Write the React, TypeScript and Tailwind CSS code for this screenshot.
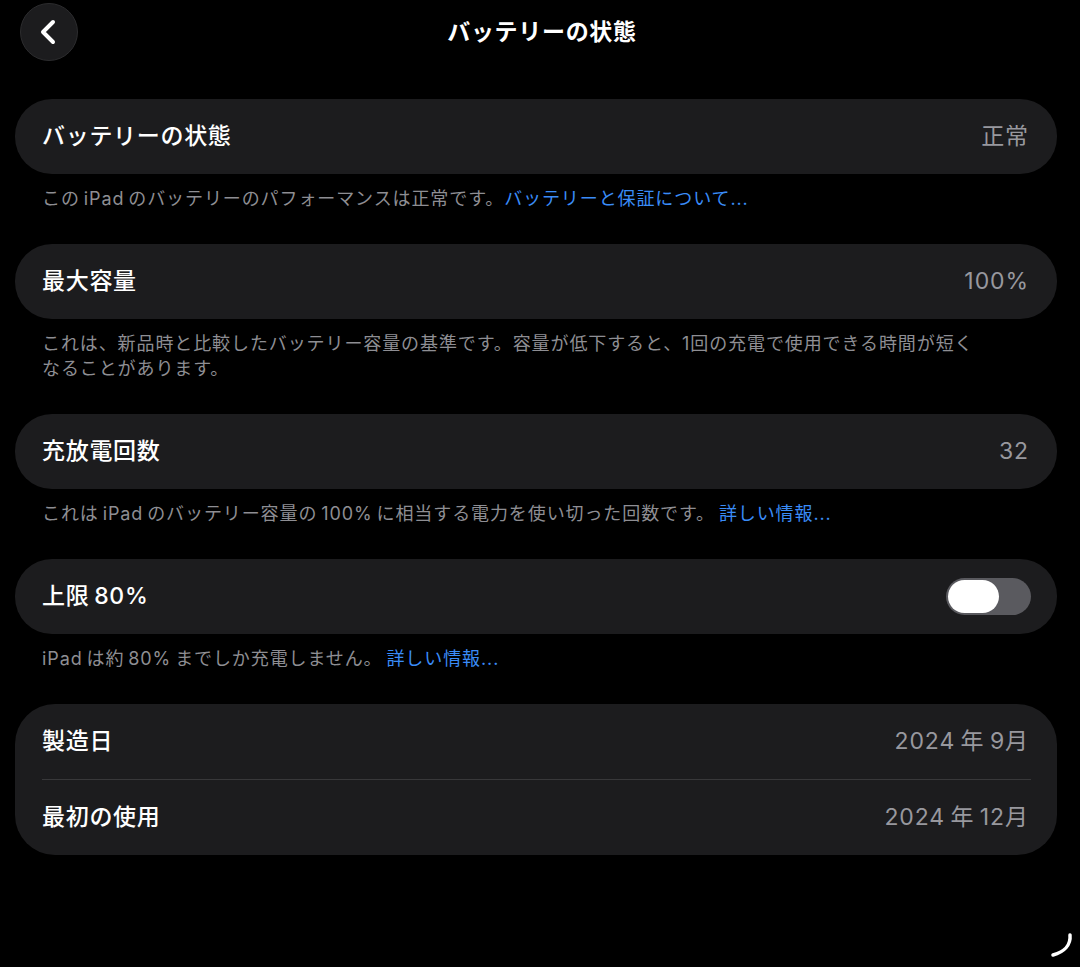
import React, { useState } from 'react';

const font = { fontFamily: 'Inter, "Noto Sans CJK JP", sans-serif' };

const Row = ({ label, value, children }: { label: string; value?: string; children?: React.ReactNode }) => (
  <div className="flex items-center justify-between h-[75px] pl-[27px] pr-[28px]">
    <span className="text-[23px] font-medium text-white tracking-[0.03em] [word-spacing:-2px]">{label}</span>
    {value && <span className="text-[23px] text-[#98989e] tracking-[0.04em] [word-spacing:-2px]">{value}</span>}
    {children}
  </div>
);

const Note = ({ children }: { children: React.ReactNode }) => (
  <div className="pl-[27px] pt-[12px] pb-[33px] max-w-[975px]">
    <p className="text-[18px] leading-[25px] text-[#8e8e93] tracking-[0.05em] [word-spacing:-2px]">{children}</p>
  </div>
);

const Link = ({ children }: { children: React.ReactNode }) => (
  <span className="text-[#3a8cf7]">{children}</span>
);

export default function App() {
  const [limit, setLimit] = useState(false);

  return (
    <div className="relative min-h-[967px] bg-black text-white overflow-hidden" style={font}>
      <header className="relative h-[99px]">
        <button className="absolute left-[20px] top-[3px] w-[58px] h-[58px] rounded-full bg-[#1c1c1e] border border-[#2c2c2e] flex items-center justify-center">
          <svg width="22" height="26" viewBox="0 0 22 26" fill="none">
            <path d="M15 3L5 13L15 23" stroke="white" strokeWidth="4" strokeLinecap="round" strokeLinejoin="round" />
          </svg>
        </button>
        <h1 className="absolute left-0 right-0 top-[16px] text-center text-[23px] font-bold leading-[32px] tracking-[0.03em] pl-[4px]">バッテリーの状態</h1>
      </header>

      <main className="ml-[15px] w-[1042px]">
        <div className="bg-[#1c1c1e] rounded-[37px]">
          <Row label="バッテリーの状態" value="正常" />
        </div>
        <Note>
          この iPad のバッテリーのパフォーマンスは正常です。<Link>バッテリーと保証について...</Link>
        </Note>

        <div className="bg-[#1c1c1e] rounded-[37px]">
          <Row label="最大容量" value="100%" />
        </div>
        <Note>
          これは、新品時と比較したバッテリー容量の基準です。容量が低下すると、1回の充電で使用できる時間が短くなることがあります。
        </Note>

        <div className="bg-[#1c1c1e] rounded-[37px]">
          <Row label="充放電回数" value="32" />
        </div>
        <Note>
          これは iPad のバッテリー容量の 100% に相当する電力を使い切った回数です。 <Link>詳しい情報...</Link>
        </Note>

        <div className="bg-[#1c1c1e] rounded-[37px]">
          <Row label="上限 80%">
            <button
              onClick={() => setLimit(!limit)}
              className={`relative w-[85px] h-[37px] rounded-full mr-[-2px] ${limit ? 'bg-[#30d158]' : 'bg-[#5a5a5f]'}`}
            >
              <span className={`absolute top-[2px] w-[51px] h-[33px] rounded-full bg-white ${limit ? 'left-[32px]' : 'left-[2px]'}`} />
            </button>
          </Row>
        </div>
        <Note>
          iPad は約 80% までしか充電しません。 <Link>詳しい情報...</Link>
        </Note>

        <div className="bg-[#1c1c1e] rounded-[40px]">
          <Row label="製造日" value="2024 年 9月" />
          <div className="ml-[27px] mr-[26px] h-px bg-[#38383a]" />
          <Row label="最初の使用" value="2024 年 12月" />
        </div>
      </main>

      <svg className="absolute right-[3px] bottom-[5px]" width="32" height="32" viewBox="0 0 32 32" fill="none">
        <path d="M25 5C26 15 19 22 8 25" stroke="white" strokeWidth="3.5" strokeLinecap="round" />
      </svg>
    </div>
  );
}
